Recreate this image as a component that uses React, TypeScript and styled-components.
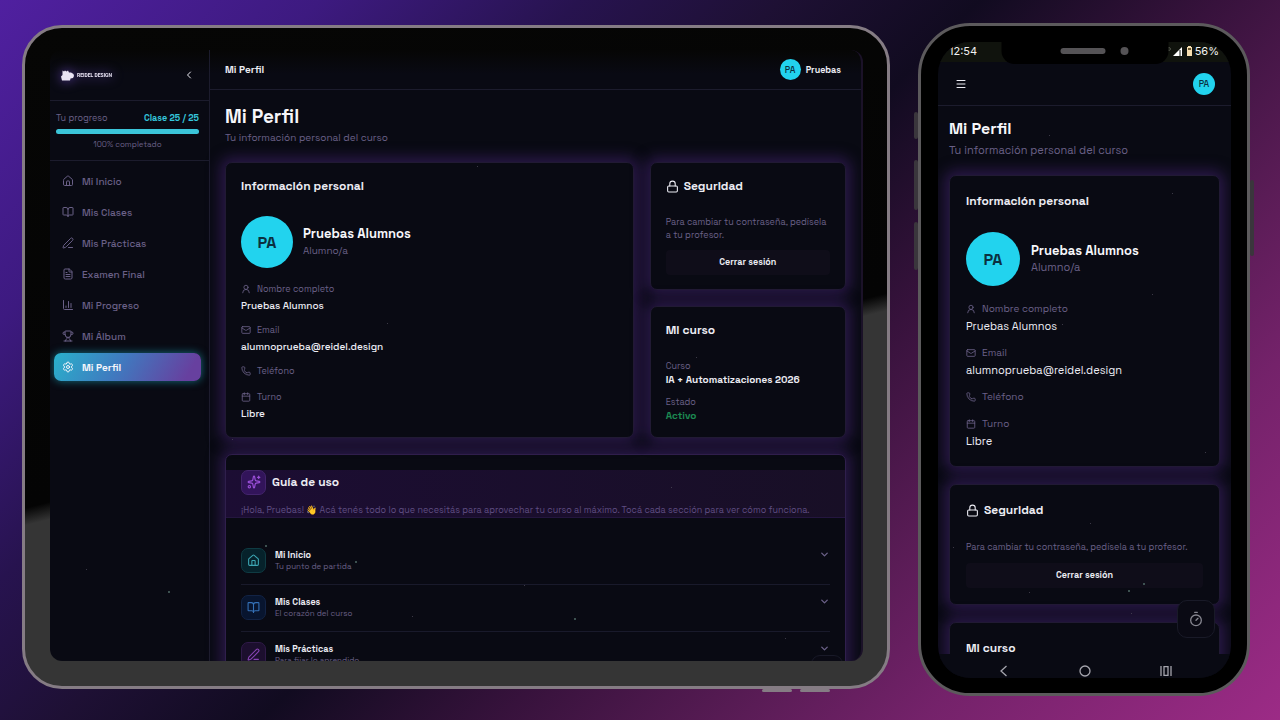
import React from "react";
import styled, { createGlobalStyle, css } from "styled-components";
import {
  BookOpen,
  Calendar,
  ChartColumn,
  ChevronDown,
  ChevronLeft,
  FileText,
  House,
  Lock,
  Mail,
  Menu,
  PenLine,
  Phone as PhoneIcon,
  Settings,
  Sparkles,
  Timer,
  Trophy,
  UserRound,
  type LucideIcon,
} from "lucide-react";

const color = {
  screen: "#090a13",
  line: "#1c1c2d",
  muted: "#6a6087",
  text: "#ececf3",
  cyan: "#22d3ee",
  green: "#1c8a52",
};

const GlobalStyle = createGlobalStyle`
  *, *::before, *::after { box-sizing: border-box; }
  body {
    margin: 0;
    font-family: "Space Grotesk", Inter, "Noto Sans", sans-serif;
    color: ${color.text};
    background: #0f0b20;
  }
  h1, h2, h3, p, dl, dd, ul { margin: 0; padding: 0; }
  ul { list-style: none; }
  button { font: inherit; color: inherit; border: 0; background: none; padding: 0; cursor: pointer; }
  a { color: inherit; text-decoration: none; }
  svg { flex: none; display: block; }
`;

/* ---------- devices ---------- */

const Stage = styled.div`
  min-height: 100vh;
  display: grid;
  grid-template-columns: minmax(0, 868fr) minmax(0, 332fr);
  align-items: start;
  gap: 28px;
  padding: 23px 30px 23px 22px;
  background: linear-gradient(
    135deg,
    #5020a0 0%,
    #3d1a80 16%,
    #27134f 29%,
    #1e1034 39%,
    #110b20 49%,
    #37123c 61%,
    #5a1c56 73%,
    #74226a 82%,
    #9c2b86 100%
  );
`;

const TabletFrame = styled.div`
  position: relative;
  height: calc(100vh - 56px);
  margin-top: 2px;
  padding: 22px 24px 25px 25px;
  border: 3px solid #857c84;
  border-radius: 40px;
  background: linear-gradient(166deg, #060605 0%, #040404 55%, #353535 57%);
`;

const PhoneFrame = styled.div`
  position: relative;
  height: calc(100vh - 47px);
  padding: 16px 16px 15px 17px;
  border: 3px solid #5c5a5c;
  border-radius: 52px;
  background: #000;
`;

const SideKey = styled.span<{ $side: "left" | "right"; $top: number; $size: number }>`
  position: absolute;
  ${(p) => p.$side}: -7px;
  top: ${(p) => p.$top}px;
  width: 4px;
  height: ${(p) => p.$size}px;
  border-radius: 2px;
  background: #3a363c;
`;

const BottomKey = styled.span<{ $right: number }>`
  position: absolute;
  bottom: -6px;
  right: ${(p) => p.$right}px;
  width: 30px;
  height: 3px;
  border-radius: 2px;
  background: #857c84;
`;

const TabletScreen = styled.div`
  position: relative;
  height: 100%;
  display: flex;
  overflow: hidden;
  border-radius: 12px;
  border-right: 2px solid #1b1228;
  background: linear-gradient(#060605 0, ${color.screen} 24px);
`;

const PhoneScreen = styled.div`
  position: relative;
  height: 100%;
  display: flex;
  flex-direction: column;
  overflow: hidden;
  border-radius: 32px;
  background: ${color.screen};
`;

const Star = styled.i<{ $x: number; $y: number; $dim?: boolean }>`
  position: absolute;
  z-index: 2;
  left: ${(p) => p.$x}%;
  top: ${(p) => p.$y}%;
  width: ${(p) => (p.$dim ? 1 : 2)}px;
  height: ${(p) => (p.$dim ? 1 : 2)}px;
  border-radius: 50%;
  background: ${(p) => (p.$dim ? "#4c4a58" : "#4f6a66")};
`;

/* ---------- sidebar ---------- */

const Sidebar = styled.aside`
  flex: none;
  width: 160px;
  border-right: 1px solid ${color.line};
`;

const Brand = styled.div`
  height: 51px;
  display: flex;
  align-items: center;
  justify-content: space-between;
  padding: 0 14px 0 11px;
  border-bottom: 1px solid ${color.line};
`;

const BrandLogo = styled.a`
  display: flex;
  align-items: center;
  gap: 3px;
  font: 700 5px Roboto, "Liberation Sans", sans-serif;
  color: #e9e4f4;
  filter: drop-shadow(0 0 6px rgba(139, 92, 246, 0.7));
`;

const Progress = styled.section`
  height: 60px;
  padding: 8px 10px 0 6px;
  border-bottom: 1px solid ${color.line};
`;

const ProgressHead = styled.div`
  display: flex;
  justify-content: space-between;
  line-height: 18px;
  font-size: 9px;
  color: ${color.muted};

  strong {
    color: #35c6dc;
  }
`;

const ProgressTrack = styled.div`
  height: 5px;
  margin: 2px 0 4px;
  border-radius: 3px;
  background: #1a1a2b;
`;

const ProgressFill = styled.div`
  height: 100%;
  border-radius: inherit;
  background: #3bc5d9;
`;

const ProgressNote = styled.p`
  text-align: center;
  font-size: 8px;
  line-height: 13px;
  color: ${color.muted};
`;

const NavList = styled.ul`
  display: flex;
  flex-direction: column;
  gap: 3px;
  padding: 6px 8px 0 4px;
`;

const NavLink = styled.a<{ $active?: boolean }>`
  display: flex;
  align-items: center;
  gap: 8px;
  height: 28px;
  padding: 0 8px;
  border-radius: 7px;
  font-size: 10px;
  font-weight: 500;
  color: ${color.muted};
  ${(p) =>
    p.$active &&
    css`
      font-weight: 700;
      color: #f4f6fb;
      background: linear-gradient(120deg, #29b0cb 0%, #4079bf 45%, #67409f 90%);
      box-shadow: 0 0 8px rgba(34, 211, 238, 0.5);
    `}
`;

/* ---------- page parts shared by both devices ---------- */

const Main = styled.main`
  flex: 1;
  min-width: 0;
`;

const TopBar = styled.header<{ $phone?: boolean }>`
  flex: none;
  display: flex;
  align-items: center;
  justify-content: space-between;
  height: ${(p) => (p.$phone ? 44 : 40)}px;
  padding: ${(p) => (p.$phone ? "0 16px 0 17px" : "0 20px 0 15px")};
  border-bottom: 1px solid ${color.line};
  font-size: 10px;
  font-weight: 700;
`;

const UserChip = styled.div`
  display: flex;
  align-items: center;
  gap: 5px;
  font-size: 9px;
  font-weight: 600;
`;

const Avatar = styled.span<{ $size: number; $font: number }>`
  flex: none;
  display: grid;
  place-items: center;
  width: ${(p) => p.$size}px;
  height: ${(p) => p.$size}px;
  border-radius: 50%;
  background: ${color.cyan};
  color: #0b3040;
  font-size: ${(p) => p.$font}px;
  font-weight: ${(p) => (p.$font > 10 ? 700 : 500)};
`;

const Content = styled.div<{ $phone?: boolean }>`
  ${(p) =>
    p.$phone
      ? css`
          flex: 1;
          min-height: 0;
          overflow: hidden;
          padding: 11px 11px 0;
        `
      : css`
          padding: 15px 15px 0;
        `}
`;

const PageTitle = styled.h1<{ $phone?: boolean }>`
  font-size: ${(p) => (p.$phone ? 16 : 19)}px;
  line-height: 24px;
  font-weight: 700;
  color: #f6f6fa;
`;

const PageSub = styled.p<{ $phone?: boolean }>`
  margin-bottom: ${(p) => (p.$phone ? 16 : 15)}px;
  font-size: ${(p) => (p.$phone ? 11 : 10)}px;
  line-height: 18px;
  color: ${color.muted};
`;

const CardGrid = styled.div<{ $phone?: boolean }>`
  display: grid;
  ${(p) =>
    p.$phone
      ? css`
          gap: 17px;
        `
      : css`
          grid-template-columns: minmax(0, 408fr) minmax(0, 196fr);
          gap: 16px;
        `}
`;

const Stack = styled.div`
  display: flex;
  flex-direction: column;
  gap: 16px;
`;

const Card = styled.section<{ $phone?: boolean }>`
  padding: ${(p) => (p.$phone ? "16px" : "14px 15px")};
  border: 1px solid #211a34;
  border-radius: 7px;
  background: ${color.screen};
  box-shadow: 0 0 14px 5px rgba(70, 36, 118, 0.52);
`;

const CardTitle = styled.h2<{ $phone?: boolean }>`
  display: flex;
  align-items: center;
  gap: 5px;
  margin-bottom: ${(p) => (p.$phone ? 22 : 21)}px;
  font-size: 12px;
  line-height: 18px;
  font-weight: 600;
`;

const Person = styled.div<{ $phone?: boolean }>`
  display: flex;
  align-items: center;
  gap: ${(p) => (p.$phone ? 11 : 10)}px;
  margin-bottom: ${(p) => (p.$phone ? 14 : 12)}px;

  h3 {
    font-size: 13px;
    line-height: 17px;
    font-weight: ${(p) => (p.$phone ? 700 : 600)};
    color: #f6f6fa;
  }

  p {
    font-size: ${(p) => (p.$phone ? 11 : 10)}px;
    line-height: 17px;
    color: ${color.muted};
  }
`;

const FieldList = styled.dl<{ $phone?: boolean }>`
  display: flex;
  flex-direction: column;
  gap: ${(p) => (p.$phone ? 9 : 8)}px;

  dt {
    display: flex;
    align-items: center;
    gap: 6px;
    font-size: ${(p) => (p.$phone ? 10 : 9)}px;
    line-height: 18px;
    color: ${color.muted};
  }

  dd {
    font-size: ${(p) => (p.$phone ? 11 : 10)}px;
    line-height: ${(p) => (p.$phone ? 17 : 15)}px;
    font-weight: ${(p) => (p.$phone ? 400 : 500)};
  }
`;

const Note = styled.p<{ $phone?: boolean }>`
  margin-bottom: ${(p) => (p.$phone ? 8 : 7)}px;
  font-size: 9px;
  line-height: 13px;
  color: ${color.muted};
`;

const SignOut = styled.button`
  width: 100%;
  height: 25px;
  border-radius: 4px;
  background: #0f0d19;
  font-size: 9px;
  font-weight: 600;
  text-align: center;
`;

const CourseList = styled.dl`
  display: flex;
  flex-direction: column;
  gap: 9px;

  dt {
    font-size: 9px;
    line-height: 13px;
    color: ${color.muted};
  }

  dd {
    font-size: 10px;
    line-height: 14px;
    font-weight: 700;
  }
`;

const Active = styled.dd`
  color: ${color.green};
`;

/* ---------- guide ---------- */

const GuideCard = styled(Card)`
  margin-top: 16px;
  padding: 15px 0;
  border-color: #2f1f4c;
`;

const GuideHead = styled.div`
  padding: 0 15px;
  border-bottom: 1px solid #24163f;
  background: linear-gradient(90deg, #1c0d33, #180f26);
`;

const GuideTitle = styled.h2`
  display: flex;
  align-items: center;
  gap: 6px;
  font-size: 12px;
  line-height: 25px;
  font-weight: 600;
`;

const GuideIntro = styled.p`
  padding-top: 8px;
  font-size: 9px;
  line-height: 14px;
  white-space: nowrap;
  color: #5f4d82;
`;

const GuideList = styled.ul`
  padding: 20px 15px 0;
`;

const GuideItem = styled.li`
  border-bottom: 1px solid #191a2b;
`;

const GuideRow = styled.button`
  width: 100%;
  height: 46px;
  display: flex;
  align-items: center;
  gap: 9px;
  text-align: left;
  color: ${color.muted};
`;

const GuideText = styled.span`
  flex: 1;
  font-size: 8px;
  line-height: 11px;

  strong {
    display: block;
    font-size: 9px;
    line-height: 12px;
    font-weight: 700;
    color: ${color.text};
  }
`;

const ChevronSlot = styled.span`
  height: 24px;
`;

const IconTile = styled.span<{ $tone: "violet" | "cyan" | "blue" | "purple" }>`
  flex: none;
  display: grid;
  place-items: center;
  width: 25px;
  height: 25px;
  border-radius: 7px;
  border: 1px solid;
  ${(p) =>
    ({
      violet: "color:#9a4fd8;background:#32145a;border-color:#43246c;",
      cyan: "color:#3ca5b2;background:#06222b;border-color:#0f3b43;",
      blue: "color:#3471b8;background:#08152f;border-color:#122345;",
      purple: "color:#8744b4;background:#1c0f2e;border-color:#2f1a48;",
    })[p.$tone]}
`;

const FloatingButton = styled.button<{ $phone?: boolean }>`
  position: absolute;
  z-index: 3;
  display: grid;
  place-items: center;
  width: ${(p) => (p.$phone ? 38 : 32)}px;
  height: ${(p) => (p.$phone ? 38 : 32)}px;
  right: ${(p) => (p.$phone ? 16 : 18)}px;
  bottom: ${(p) => (p.$phone ? 40 : -26)}px;
  border: 1px solid #191a28;
  border-radius: ${(p) => (p.$phone ? 10 : 9)}px;
  background: #0a0a14;
  color: #85858f;
`;

/* ---------- phone chrome ---------- */

const StatusBar = styled.div`
  flex: none;
  display: flex;
  align-items: center;
  justify-content: space-between;
  height: 20px;
  padding: 0 12px 2px 11px;
  background: #10130d;
  font-family: Inter, sans-serif;
  font-size: 11px;
  line-height: 16px;
  color: #f2f2f2;
`;

const StatusIcons = styled.span`
  display: flex;
  align-items: center;
  gap: 1px;
`;

const Notch = styled.div`
  position: absolute;
  z-index: 3;
  top: 0;
  left: 50%;
  transform: translateX(-50%);
  display: flex;
  align-items: center;
  justify-content: flex-end;
  gap: 15px;
  width: 167px;
  height: 22px;
  padding: 0 40px 4px 0;
  border-radius: 0 0 13px 13px;
  background: #000;
`;

const Speaker = styled.span`
  width: 45px;
  height: 6px;
  border-radius: 3px;
  background: #555356;
`;

const Camera = styled.span`
  width: 8px;
  height: 8px;
  border-radius: 50%;
  background: #555356;
`;

const SystemNav = styled.nav`
  flex: none;
  display: flex;
  justify-content: space-between;
  align-items: center;
  height: 24px;
  padding: 9px 59px 0 60px;
  background: ${color.screen};
  color: #a5a5ad;
`;

/* ---------- data ---------- */

const navItems: { label: string; icon: LucideIcon; active?: boolean }[] = [
  { label: "Mi Inicio", icon: House },
  { label: "Mis Clases", icon: BookOpen },
  { label: "Mis Prácticas", icon: PenLine },
  { label: "Examen Final", icon: FileText },
  { label: "Mi Progreso", icon: ChartColumn },
  { label: "Mi Álbum", icon: Trophy },
  { label: "Mi Perfil", icon: Settings, active: true },
];

const fields: { label: string; icon: LucideIcon; value?: string }[] = [
  { label: "Nombre completo", icon: UserRound, value: "Pruebas Alumnos" },
  { label: "Email", icon: Mail, value: "alumnoprueba@reidel.design" },
  { label: "Teléfono", icon: PhoneIcon },
  { label: "Turno", icon: Calendar, value: "Libre" },
];

const guide: { label: string; note: string; icon: LucideIcon; tone: "cyan" | "blue" | "purple" }[] = [
  { label: "Mi Inicio", note: "Tu punto de partida", icon: House, tone: "cyan" },
  { label: "Mis Clases", note: "El corazón del curso", icon: BookOpen, tone: "blue" },
  { label: "Mis Prácticas", note: "Para fijar lo aprendido", icon: PenLine, tone: "purple" },
];

type StarSpec = [x: number, y: number, dim?: boolean];

const tabletStars: StarSpec[] = [
  [4.5, 85, true], [14.5, 88.5], [41.6, 44.6, true], [26.5, 81], [37.6, 83.6],
  [44.6, 92.6, true], [64.6, 93], [79.7, 50.3, true], [58.5, 87.5, true],
  [90.6, 96.3, true], [76.6, 71.5, true], [52.7, 19, true], [22.5, 63.6, true],
];

const phoneStars: StarSpec[] = [
  [38, 14.7, true], [80, 23.8, true], [73, 39.7, true], [42.3, 44.4, true],
  [91, 64.5, true], [52, 75.6, true], [5, 79.4, true], [70, 85],
  [65, 86.2], [31, 86.4, true], [66, 89.8, true], [84, 88],
];

/* ---------- components ---------- */

function Stars({ items }: { items: StarSpec[] }) {
  return (
    <>
      {items.map(([x, y, dim]) => (
        <Star key={`${x}-${y}`} $x={x} $y={y} $dim={dim} />
      ))}
    </>
  );
}

function ProfileCard({ phone }: { phone?: boolean }) {
  return (
    <Card $phone={phone}>
      <CardTitle $phone={phone}>Información personal</CardTitle>
      <Person $phone={phone}>
        <Avatar $size={phone ? 54 : 52} $font={16}>PA</Avatar>
        <div>
          <h3>Pruebas Alumnos</h3>
          <p>Alumno/a</p>
        </div>
      </Person>
      <FieldList $phone={phone}>
        {fields.map(({ label, icon: Icon, value }) => (
          <div key={label}>
            <dt>
              <Icon size={10} strokeWidth={2} />
              {label}
            </dt>
            {value && <dd>{value}</dd>}
          </div>
        ))}
      </FieldList>
    </Card>
  );
}

function SecurityCard({ phone }: { phone?: boolean }) {
  return (
    <Card $phone={phone}>
      <CardTitle $phone={phone}>
        <Lock size={13} strokeWidth={2} />
        Seguridad
      </CardTitle>
      <Note $phone={phone}>Para cambiar tu contraseña, pedísela a tu profesor.</Note>
      <SignOut type="button">Cerrar sesión</SignOut>
    </Card>
  );
}

function CourseCard({ phone }: { phone?: boolean }) {
  return (
    <Card $phone={phone}>
      <CardTitle $phone={phone}>Mi curso</CardTitle>
      {!phone && (
        <CourseList>
          <div>
            <dt>Curso</dt>
            <dd>IA + Automatizaciones 2026</dd>
          </div>
          <div>
            <dt>Estado</dt>
            <Active>Activo</Active>
          </div>
        </CourseList>
      )}
    </Card>
  );
}

function Tablet() {
  return (
    <TabletFrame>
      <BottomKey $right={95} />
      <BottomKey $right={57} />
      <TabletScreen>
        <Sidebar>
          <Brand>
            <BrandLogo href="#inicio">
              <svg width="13" height="11" viewBox="0 0 26 22" fill="currentColor">
                <path d="M3 5V1l3 2 2-2 3 2 3-2 2 4h4l5 3 1 4-2 4-5 1-1 4H2l-1-4-1-4 3-3z" />
              </svg>
              REIDEL DESIGN
            </BrandLogo>
            <button type="button" aria-label="Contraer menú">
              <ChevronLeft size={12} />
            </button>
          </Brand>
          <Progress>
            <ProgressHead>
              <span>Tu progreso</span>
              <strong>Clase 25 / 25</strong>
            </ProgressHead>
            <ProgressTrack>
              <ProgressFill style={{ width: "100%" }} />
            </ProgressTrack>
            <ProgressNote>100% completado</ProgressNote>
          </Progress>
          <nav>
            <NavList>
              {navItems.map(({ label, icon: Icon, active }) => (
                <li key={label}>
                  <NavLink href="#" $active={active}>
                    <Icon size={12} strokeWidth={2} />
                    {label}
                  </NavLink>
                </li>
              ))}
            </NavList>
          </nav>
        </Sidebar>
        <Main>
          <TopBar>
            <span>Mi Perfil</span>
            <UserChip>
              <Avatar $size={21} $font={9}>PA</Avatar>
              Pruebas
            </UserChip>
          </TopBar>
          <Content>
            <PageTitle>Mi Perfil</PageTitle>
            <PageSub>Tu información personal del curso</PageSub>
            <CardGrid>
              <ProfileCard />
              <Stack>
                <SecurityCard />
                <CourseCard />
              </Stack>
            </CardGrid>
            <GuideCard>
              <GuideHead>
                <GuideTitle>
                  <IconTile $tone="violet">
                    <Sparkles size={14} />
                  </IconTile>
                  Guía de uso
                </GuideTitle>
                <GuideIntro>
                  ¡Hola, Pruebas! 👋 Acá tenés todo lo que necesitás para aprovechar tu curso al máximo. Tocá
                  cada sección para ver cómo funciona.
                </GuideIntro>
              </GuideHead>
              <GuideList>
                {guide.map(({ label, note, icon: Icon, tone }) => (
                  <GuideItem key={label}>
                    <GuideRow type="button" aria-expanded={false}>
                      <IconTile $tone={tone}>
                        <Icon size={13} />
                      </IconTile>
                      <GuideText>
                        <strong>{label}</strong>
                        {note}
                      </GuideText>
                      <ChevronSlot>
                        <ChevronDown size={11} strokeWidth={3} />
                      </ChevronSlot>
                    </GuideRow>
                  </GuideItem>
                ))}
              </GuideList>
            </GuideCard>
          </Content>
        </Main>
        <Stars items={tabletStars} />
        <FloatingButton type="button" aria-label="Temporizador" />
      </TabletScreen>
    </TabletFrame>
  );
}

function Phone() {
  return (
    <PhoneFrame>
      <SideKey $side="left" $top={86} $size={27} />
      <SideKey $side="left" $top={134} $size={50} />
      <SideKey $side="left" $top={196} $size={48} />
      <SideKey $side="right" $top={154} $size={76} />
      <PhoneScreen>
        <StatusBar>
          <span>12:54</span>
          <StatusIcons>
            <svg width="27" height="12" viewBox="0 0 27 12">
              <circle cx="2" cy="4" r="1.4" fill="none" stroke="#55584f" />
              <path d="M6 11L15 2v9z" fill="#fff" />
              <path d="M13 5v6" stroke="#10130d" />
              <path d="M20 2h1V1h3v1h1v9h-5z" fill="#f7dfb0" />
              <path d="M21 3h3v2h-3z" fill="#6b5a34" />
            </svg>
            56%
          </StatusIcons>
        </StatusBar>
        <Notch>
          <Speaker />
          <Camera />
        </Notch>
        <TopBar $phone>
          <button type="button" aria-label="Abrir menú">
            <Menu size={12} />
          </button>
          <Avatar $size={22} $font={9}>PA</Avatar>
        </TopBar>
        <Content $phone>
          <PageTitle $phone>Mi Perfil</PageTitle>
          <PageSub $phone>Tu información personal del curso</PageSub>
          <CardGrid $phone>
            <ProfileCard phone />
            <SecurityCard phone />
            <CourseCard phone />
          </CardGrid>
        </Content>
        <SystemNav>
          <button type="button" aria-label="Atrás">
            <svg width="12" height="12" viewBox="0 0 12 12" fill="none" stroke="currentColor" strokeWidth="1.3">
              <path d="M8.500 1L3 6l5.500 5" />
            </svg>
          </button>
          <button type="button" aria-label="Inicio">
            <svg width="12" height="12" viewBox="0 0 12 12" fill="none" stroke="currentColor" strokeWidth="1.3">
              <circle cx="6" cy="6" r="5" />
            </svg>
          </button>
          <button type="button" aria-label="Recientes">
            <svg width="12" height="12" viewBox="0 0 12 12" fill="none" stroke="currentColor" strokeWidth="1.3">
              <path d="M1 1v10M11 1v10M4 1.600h4v8.800H4z" />
            </svg>
          </button>
        </SystemNav>
        <Stars items={phoneStars} />
        <FloatingButton $phone type="button" aria-label="Temporizador">
          <Timer size={16} strokeWidth={2} />
        </FloatingButton>
      </PhoneScreen>
    </PhoneFrame>
  );
}

export default function App() {
  return (
    <>
      <GlobalStyle />
      <Stage>
        <Tablet />
        <Phone />
      </Stage>
    </>
  );
}
